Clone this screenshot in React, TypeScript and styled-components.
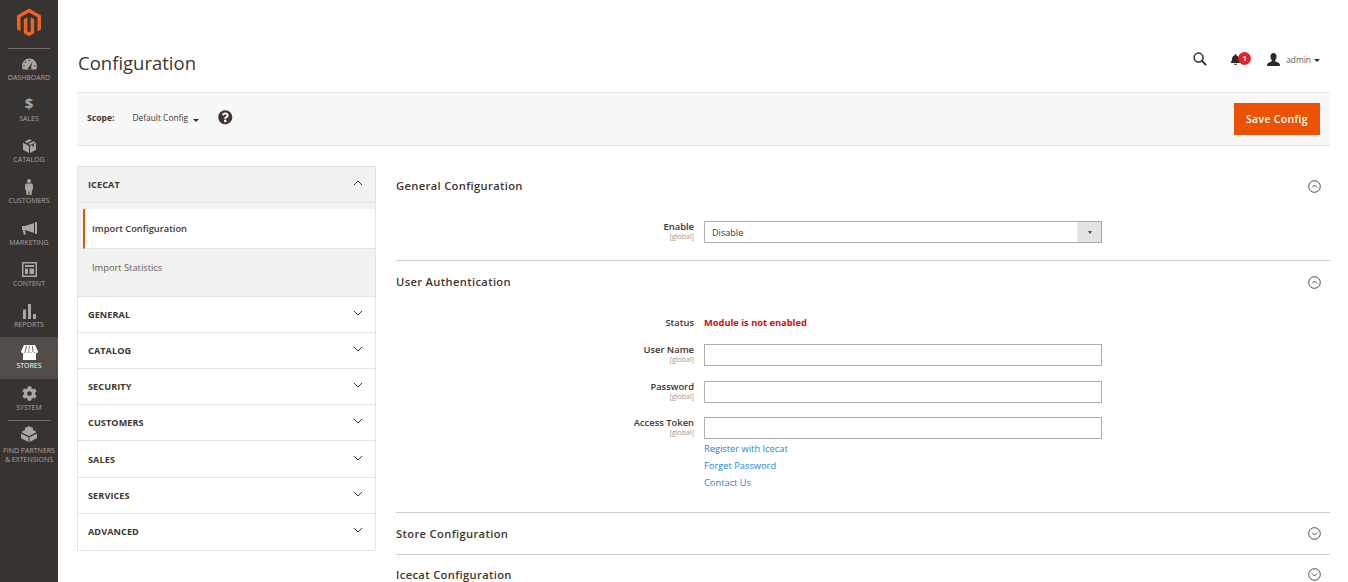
import React from "react";
import styled, { createGlobalStyle } from "styled-components";
import { FaBell, FaCog, FaQuestionCircle } from "react-icons/fa";

const Global = createGlobalStyle`
  html, body { margin: 0; padding: 0; height: 582px; overflow: hidden; background: #fff; }
  body { font-family: "Open Sans", sans-serif; color: #41362f; }
  * { box-sizing: border-box; }
`;

const Page = styled.div`
  display: flex;
  width: 1348px;
  height: 582px;
  overflow: hidden;
`;

const Sidebar = styled.nav`
  flex: 0 0 58px;
  background: #373330;
  display: flex;
  flex-direction: column;
  align-items: stretch;
`;

const LogoBox = styled.div`
  height: 47.6px;
  padding-top: 8px;
  display: flex;
  justify-content: center;
`;

const SideRule = styled.div`
  height: 1px;
  margin: 0 8px;
  background: #736d68;
`;

const NavItem = styled.div<{ $active?: boolean }>`
  height: 41.25px;
  padding-top: 7px;
  display: flex;
  flex-direction: column;
  align-items: center;
  background: ${(p) => (p.$active ? "#524d49" : "transparent")};
  color: ${(p) => (p.$active ? "#fff" : "#aaa6a0")};
`;

const PartnerItem = styled(NavItem)`
  height: 50px;
  padding-top: 5px;
`;

const NavIcon = styled.div`
  height: 16px;
  width: 20px;
  display: flex;
  align-items: center;
  justify-content: center;
  svg { display: block; }
`;

const NavLabel = styled.div`
  margin-top: 1px;
  font-size: 7px;
  line-height: 9px;
  text-transform: uppercase;
  text-align: center;
  white-space: nowrap;
`;

const PartnerLabel = styled(NavLabel)`
  margin-top: 4px;
`;

const Dollar = styled.span`
  font-size: 15px;
  font-weight: 700;
  line-height: 16px;
  margin-bottom: 3px;
`;

const Main = styled.main`
  flex: 1;
  min-width: 0;
  padding: 0 18px 0 19px;
`;

const Header = styled.header`
  height: 92px;
  padding-top: 49px;
  display: flex;
  align-items: flex-start;
  justify-content: space-between;
`;

const Title = styled.h1`
  margin: 0 0 0 1px;
  font-size: 18.5px;
  line-height: 28px;
  font-weight: 400;
  color: #41362f;
`;

const HeaderActions = styled.div`
  display: flex;
  align-items: center;
  height: 20px;
  padding-right: 10px;
`;

const IconSlot = styled.div<{ $left?: number }>`
  position: relative;
  display: flex;
  align-items: center;
  margin-left: ${(p) => p.$left ?? 0}px;
  color: #2f2a27;
`;

const Badge = styled.span`
  position: absolute;
  left: 8px;
  top: -2px;
  width: 13px;
  height: 13px;
  border-radius: 50%;
  background: #e22626;
  color: #fff;
  font-size: 7px;
  font-weight: 700;
  line-height: 13px;
  text-align: center;
`;

const UserName = styled.span`
  margin-left: 6px;
  font-size: 8.4px;
  color: #676056;
`;

const Caret = styled.span`
  display: inline-block;
  width: 0;
  height: 0;
  border-left: 3px solid transparent;
  border-right: 3px solid transparent;
  border-top: 3px solid #2b2b2b;
`;

const UserCaret = styled(Caret)`
  margin: 3px 0 0 3px;
`;

const Toolbar = styled.div`
  height: 54px;
  background: #f8f8f8;
  border-top: 1px solid #e3e3e3;
  border-bottom: 1px solid #e3e3e3;
  display: flex;
  align-items: center;
  padding: 0 10px;
`;

const ScopeLabel = styled.span`
  font-size: 8.6px;
  font-weight: 700;
  color: #41362f;
  margin-bottom: 2px;
`;

const ScopeValue = styled.span`
  margin-left: 18px;
  font-size: 8.4px;
  color: #41362f;
  margin-bottom: 3px;
`;

const ScopeCaret = styled.span`
  margin: 3px 19px 0 5px;
  display: flex;
`;

const Help = styled.span`
  display: flex;
  color: #41362f;
  margin-bottom: 3px;
`;

const SaveButton = styled.button`
  margin-left: auto;
  width: 86px;
  height: 32px;
  border: 0;
  background: #eb5202;
  color: #fff;
  font-family: "Open Sans", sans-serif;
  font-size: 10.5px;
  font-weight: 600;
  letter-spacing: 0.03em;
`;

const Columns = styled.div`
  display: flex;
  align-items: flex-start;
  padding-top: 19px;
`;

const ConfigNav = styled.aside`
  flex: 0 0 299px;
  margin-top: 1px;
  border: 1px solid #e3e3e3;
`;

const TabHead = styled.div<{ $open?: boolean }>`
  height: ${(p) => (p.$open ? "36px" : "36.2px")};
  padding: 0 12px 0 10px;
  display: flex;
  align-items: center;
  justify-content: space-between;
  background: ${(p) => (p.$open ? "#f1f1f1" : "#fff")};
  border-bottom: 1px solid #e3e3e3;
  &:last-child { border-bottom: 0; }
  svg { display: block; margin-bottom: 3px; }
`;

const TabTitle = styled.span`
  font-size: 9.1px;
  font-weight: 700;
  letter-spacing: 0.01em;
  text-transform: uppercase;
  color: #41362f;
`;

const TabBody = styled.div`
  background: #f1f1f1;
  padding: 6px 0 0 5px;
  height: 93.7px;
  border-bottom: 1px solid #e3e3e3;
`;

const TabLink = styled.div<{ $current?: boolean }>`
  height: ${(p) => (p.$current ? "40px" : "37px")};
  display: flex;
  align-items: center;
  padding-left: ${(p) => (p.$current ? "7px" : "9px")};
  font-size: 9.3px;
  font-weight: ${(p) => (p.$current ? 600 : 400)};
  color: ${(p) => (p.$current ? "#41362f" : "#676056")};
  background: ${(p) => (p.$current ? "#fff" : "transparent")};
  border-left: ${(p) => (p.$current ? "2px solid #eb5202" : "0")};
  border-bottom: ${(p) => (p.$current ? "1px solid #e3e3e3" : "0")};
`;

const Content = styled.section`
  flex: 1;
  min-width: 0;
  margin-left: 20px;
`;

const PanelHead = styled.div`
  height: 41px;
  padding-right: 9px;
  display: flex;
  align-items: center;
  justify-content: space-between;
`;

const Panel = styled.div<{ $pad?: number }>`
  padding-bottom: ${(p) => p.$pad ?? 0}px;
  border-bottom: 1px solid #cccccc;
  &:last-child { border-bottom: 0; }
  &:last-child ${PanelHead} { height: 40px; }
`;

const PanelTitle = styled.h2`
  margin: 0;
  font-size: 11.2px;
  font-weight: 600;
  letter-spacing: 0.03em;
  color: #41362f;
`;

const FieldRow = styled.div<{ $top: number }>`
  display: flex;
  margin-top: ${(p) => p.$top}px;
`;

const FieldLabel = styled.div`
  flex: 0 0 298px;
  text-align: right;
`;

const LabelText = styled.div<{ $mid?: boolean }>`
  font-size: 9.4px;
  font-weight: 600;
  line-height: 12px;
  margin-top: ${(p) => (p.$mid ? "5px" : "0")};
  color: #41362f;
`;

const Scope = styled.div`
  font-size: 7px;
  line-height: 8px;
  color: #999;
`;

const FieldControl = styled.div`
  margin-left: 10px;
  width: 398px;
`;

const TextBox = styled.div`
  height: 22px;
  border: 1px solid #adadad;
  background: #fff;
`;

const SelectBox = styled.div`
  height: 22px;
  border: 1px solid #adadad;
  display: flex;
  align-items: center;
  justify-content: space-between;
  padding-left: 7px;
  font-size: 9.1px;
  color: #41362f;
`;

const SelectArrow = styled.span`
  width: 24px;
  height: 20px;
  background: #e3e3e3;
  border-left: 1px solid #e8e8e8;
  display: flex;
  align-items: center;
  justify-content: center;
`;

const SelectCaret = styled(Caret)`
  border-left-width: 2.5px;
  border-right-width: 2.5px;
  border-top-color: #514943;
`;

const StatusText = styled.div`
  font-size: 9.3px;
  font-weight: 700;
  line-height: 22px;
  color: #d10c0c;
`;

const StatusRow = styled(FieldRow)`
  line-height: 22px;
`;

const HelpLinks = styled.div`
  padding-top: 0.5px;
`;

const HelpLink = styled.a`
  display: block;
  height: 17px;
  font-size: 9.3px;
  line-height: 17px;
  color: #2285d8;
`;

const RoundSvg = styled.svg<{ $up?: boolean }>`
  display: block;
  margin-top: ${(p) => (p.$up ? "2px" : "0")};
`;

const MagentoLogo = () => (
  <svg width="24" height="29" viewBox="0 0 256 300" fill="#f26322" aria-hidden="true">
    <path d="M128 0 256 74V222L219 243V95L128 42 37 95V243L0 222V74Z" />
    <path d="M73 116 110 95V243L128 254 146 243V95L183 116V264L128 296 73 264Z" />
  </svg>
);

const Gauge = () => (
  <svg width="15" height="12" viewBox="0 0 30 24" fill="currentColor" aria-hidden="true">
    <path fillRule="evenodd" d="M15 1C7 1 0 8 0 16c0 3 1 5 2 7h26c1-2 2-4 2-7C30 8 23 1 15 1ZM15 4a1.5 1.5 0 1 1 0 3 1.5 1.5 0 0 1 0-3ZM7 7a1.5 1.5 0 1 1 0 3 1.5 1.5 0 0 1 0-3ZM4 14a1.5 1.5 0 1 1 0 3 1.5 1.5 0 0 1 0-3ZM26 14a1.5 1.5 0 1 1 0 3 1.5 1.5 0 0 1 0-3ZM21 7 18 19a3.2 3.2 0 1 1-4-1Z" />
  </svg>
);

const BoxIcon = () => (
  <svg width="13" height="14" viewBox="0 0 26 28" fill="currentColor" aria-hidden="true">
    <path d="M13 0 18 2.700 8 8.200 3 5.500Z" />
    <path d="M21 4.300 25 6.500 15 12 10.500 9.500Z" />
    <path d="M0 7.500 12 14V28L0 21.500Z" />
    <path d="M26 7.500V21.500L14 28V14L19 11.300V16L22 14.300V9.700Z" />
  </svg>
);

const Person = () => (
  <svg width="8" height="16" viewBox="0 0 16 32" fill="currentColor" aria-hidden="true">
    <circle cx="8" cy="4" r="4" />
    <path d="M2 9h12l2 3v9l-2 1v-5 8l-1 7H9v-7H7v7H3l-1-7v-8 5l-2-1v-9Z" />
  </svg>
);

const Megaphone = () => (
  <svg width="15" height="13" viewBox="0 0 30 26" fill="currentColor" aria-hidden="true">
    <path d="M0 8H6L24 2V22L6 16H5.500L8 25H3.500L1.500 16H0Z" />
    <rect x="26" y="0" width="4" height="24" />
  </svg>
);

const ContentIcon = () => (
  <svg width="15" height="15" viewBox="0 0 30 30" fill="currentColor" aria-hidden="true">
    <path fillRule="evenodd" d="M0 0H30V30H0ZM3 3V27H27V3ZM6 6H24V10H6ZM6 13H12V24H6ZM15 13H24V24H15Z" />
  </svg>
);

const Bars = () => (
  <svg width="13" height="15" viewBox="0 0 26 30" fill="currentColor" aria-hidden="true">
    <rect x="0" y="11" width="6" height="19" />
    <rect x="10" y="0" width="6" height="30" />
    <rect x="20" y="20" width="6" height="10" />
  </svg>
);

const Store = () => (
  <svg width="17" height="15" viewBox="0 0 34 30" aria-hidden="true">
    <path fill="#fff" d="M4 16H30V30H4Z" />
    <path fill="#fff" d="M6 0H28L34 13C34 17 28 17 27 14 26 17 20 17 19.500 14 18 17 16 17 14.500 14 14 17 8 17 7 14 6 17 0 17 0 13Z" />
    <path fill="#524d49" d="M10 1.500 7 13.500H9.500L12.500 1.500ZM15.500 1.500 14.500 13.500H16.500L17.500 1.500ZM21.500 1.500 23 13.500H25.500L23.500 1.500Z" opacity=".75" />
  </svg>
);

const Brick = () => (
  <svg width="16" height="16" viewBox="0 0 32 32" fill="currentColor" aria-hidden="true">
    <path d="M16 0 24 4V8L30 11V13L16 20 2 13V11L8 8V4Z" />
    <path d="M0 15 15 22.500V32L0 24.500Z" />
    <path d="M32 15V24.500L17 32V22.500Z" />
  </svg>
);

const SearchIcon = () => (
  <svg width="14" height="14" viewBox="0 0 15 15" fill="none" stroke="#2f2a27" aria-hidden="true">
    <circle cx="6" cy="6" r="4.800" strokeWidth="1.600" />
    <path d="M9.600 9.600 14 14" strokeWidth="2" />
  </svg>
);

const UserIcon = () => (
  <svg width="13" height="13" viewBox="0 0 26 26" fill="currentColor" aria-hidden="true">
    <path d="M13 0c4 0 6 3 6 7 0 3-1 6-3 8 0 2 3 3 6 4 2 1 4 2 4 7H0c0-5 2-6 4-7 3-1 6-2 6-4-2-2-3-5-3-8 0-4 2-7 6-7Z" />
  </svg>
);

const Chevron = ({ up }: { up?: boolean }) => (
  <svg width="10" height="6" viewBox="0 0 10 6" fill="none" stroke="#41362f" strokeWidth="1" aria-hidden="true">
    <path d={up ? "M1 5 5 1 9 5" : "M1 1 5 5 9 1"} />
  </svg>
);

const RoundChevron = ({ up }: { up?: boolean }) => (
  <RoundSvg $up={up} width="13" height="13" viewBox="0 0 13 13" fill="none" stroke="#41362f" strokeWidth=".9" aria-hidden="true">
    <circle cx="6.500" cy="6.500" r="5.800" />
    <path d={up ? "M4 7.500 6.500 5 9 7.500" : "M4 5.500 6.500 8 9 5.500"} />
  </RoundSvg>
);

const navItems: { label: string; icon: React.ReactNode; active?: boolean }[] = [
  { label: "Dashboard", icon: <Gauge /> },
  { label: "Sales", icon: <Dollar>$</Dollar> },
  { label: "Catalog", icon: <BoxIcon /> },
  { label: "Customers", icon: <Person /> },
  { label: "Marketing", icon: <Megaphone /> },
  { label: "Content", icon: <ContentIcon /> },
  { label: "Reports", icon: <Bars /> },
  { label: "Stores", icon: <Store />, active: true },
  { label: "System", icon: <FaCog size={15} /> },
];

const tabs = ["General", "Catalog", "Security", "Customers", "Sales", "Services", "Advanced"];

export default function App() {
  return (
    <>
      <Global />
      <Page>
        <Sidebar>
          <LogoBox>
            <MagentoLogo />
          </LogoBox>
          <SideRule />
          {navItems.map((n) => (
            <NavItem key={n.label} $active={n.active}>
              <NavIcon>{n.icon}</NavIcon>
              <NavLabel>{n.label}</NavLabel>
            </NavItem>
          ))}
          <SideRule />
          <PartnerItem>
            <NavIcon>
              <Brick />
            </NavIcon>
            <PartnerLabel>
              Find Partners
              <br />
              &amp; Extensions
            </PartnerLabel>
          </PartnerItem>
        </Sidebar>
        <Main>
          <Header>
            <Title>Configuration</Title>
            <HeaderActions>
              <IconSlot>
                <SearchIcon />
              </IconSlot>
              <IconSlot $left={23}>
                <FaBell size={11} />
                <Badge>1</Badge>
              </IconSlot>
              <IconSlot $left={26}>
                <UserIcon />
              </IconSlot>
              <UserName>admin</UserName>
              <UserCaret />
            </HeaderActions>
          </Header>
          <Toolbar>
            <ScopeLabel>Scope:</ScopeLabel>
            <ScopeValue>Default Config</ScopeValue>
            <ScopeCaret>
              <Caret />
            </ScopeCaret>
            <Help>
              <FaQuestionCircle size={14.5} />
            </Help>
            <SaveButton>Save Config</SaveButton>
          </Toolbar>
          <Columns>
            <ConfigNav>
              <TabHead $open>
                <TabTitle>Icecat</TabTitle>
                <Chevron up />
              </TabHead>
              <TabBody>
                <TabLink $current>Import Configuration</TabLink>
                <TabLink>Import Statistics</TabLink>
              </TabBody>
              {tabs.map((t) => (
                <TabHead key={t}>
                  <TabTitle>{t}</TabTitle>
                  <Chevron />
                </TabHead>
              ))}
            </ConfigNav>
            <Content>
              <Panel $pad={17}>
                <PanelHead>
                  <PanelTitle>General Configuration</PanelTitle>
                  <RoundChevron up />
                </PanelHead>
                <FieldRow $top={15}>
                  <FieldLabel>
                    <LabelText>Enable</LabelText>
                    <Scope>[global]</Scope>
                  </FieldLabel>
                  <FieldControl>
                    <SelectBox>
                      Disable
                      <SelectArrow>
                        <SelectCaret />
                      </SelectArrow>
                    </SelectBox>
                  </FieldControl>
                </FieldRow>
              </Panel>
              <Panel $pad={21}>
                <PanelHead>
                  <PanelTitle>User Authentication</PanelTitle>
                  <RoundChevron up />
                </PanelHead>
                <StatusRow $top={10}>
                  <FieldLabel>
                    <LabelText $mid>Status</LabelText>
                  </FieldLabel>
                  <FieldControl>
                    <StatusText>Module is not enabled</StatusText>
                  </FieldControl>
                </StatusRow>
                <FieldRow $top={10}>
                  <FieldLabel>
                    <LabelText>User Name</LabelText>
                    <Scope>[global]</Scope>
                  </FieldLabel>
                  <FieldControl>
                    <TextBox />
                  </FieldControl>
                </FieldRow>
                <FieldRow $top={15}>
                  <FieldLabel>
                    <LabelText>Password</LabelText>
                    <Scope>[global]</Scope>
                  </FieldLabel>
                  <FieldControl>
                    <TextBox />
                  </FieldControl>
                </FieldRow>
                <FieldRow $top={14}>
                  <FieldLabel>
                    <LabelText>Access Token</LabelText>
                    <Scope>[global]</Scope>
                  </FieldLabel>
                  <FieldControl>
                    <TextBox />
                    <HelpLinks>
                      <HelpLink>Register with Icecat</HelpLink>
                      <HelpLink>Forget Password</HelpLink>
                      <HelpLink>Contact Us</HelpLink>
                    </HelpLinks>
                  </FieldControl>
                </FieldRow>
              </Panel>
              <Panel>
                <PanelHead>
                  <PanelTitle>Store Configuration</PanelTitle>
                  <RoundChevron />
                </PanelHead>
              </Panel>
              <Panel>
                <PanelHead>
                  <PanelTitle>Icecat Configuration</PanelTitle>
                  <RoundChevron />
                </PanelHead>
              </Panel>
            </Content>
          </Columns>
        </Main>
      </Page>
    </>
  );
}
